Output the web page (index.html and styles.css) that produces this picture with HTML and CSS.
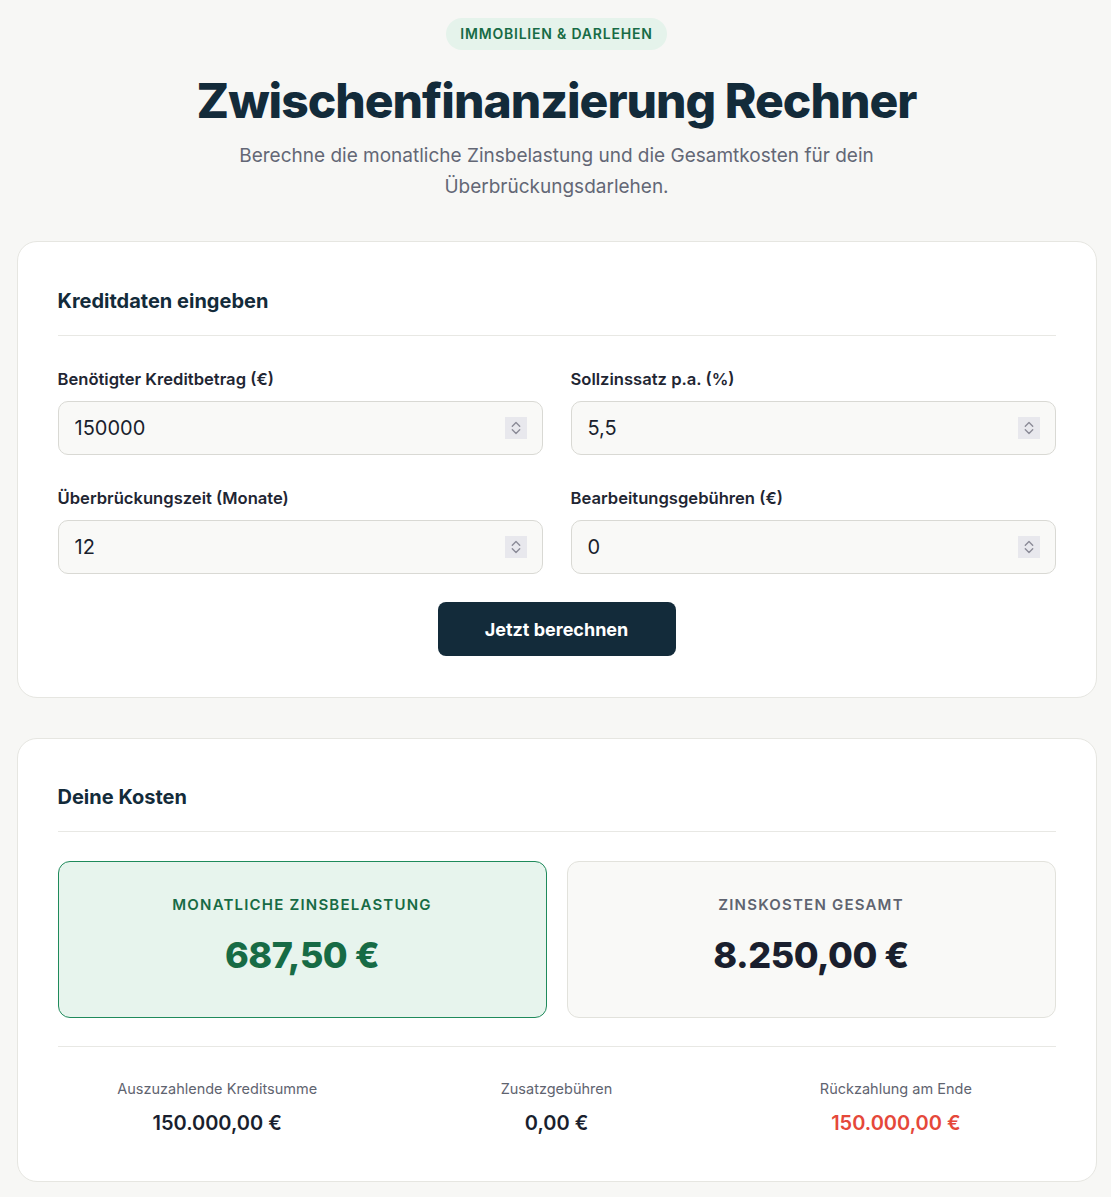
FILE: index.html
```html
<!DOCTYPE html>
<html lang="de">
<head>
    <meta charset="UTF-8">
    <meta name="viewport" content="width=device-width, initial-scale=1.0">
    <title>Zwischenfinanzierung Rechner</title>
    <link rel="stylesheet" href="styles.css">
</head>
<body>
    <div class="page">
        <header class="intro">
            <span class="badge">Immobilien &amp; Darlehen</span>
            <h1>Zwischenfinanzierung Rechner</h1>
            <p>Berechne die monatliche Zinsbelastung und die Gesamtkosten für dein Überbrückungsdarlehen.</p>
        </header>

        <!-- Eingabe -->
        <section class="card">
            <h2>Kreditdaten eingeben</h2>
            <form id="loanForm" class="fields">
                <div class="field">
                    <label for="amount">Benötigter Kreditbetrag (€)</label>
                    <div class="input-wrap">
                        <input type="text" inputmode="decimal" id="amount" value="150000">
                        <span class="spin"><svg width="22" height="22" viewBox="0 0 22 22"><path d="M7.3 9.2 11 5.6 14.7 9.2M7.3 12.8 11 16.4 14.7 12.8" fill="none" stroke="#8b8b97" stroke-width="1.4" stroke-linecap="round" stroke-linejoin="round"/></svg></span>
                    </div>
                </div>
                <div class="field">
                    <label for="rate">Sollzinssatz p.a. (%)</label>
                    <div class="input-wrap">
                        <input type="text" inputmode="decimal" id="rate" value="5,5">
                        <span class="spin"><svg width="22" height="22" viewBox="0 0 22 22"><path d="M7.3 9.2 11 5.6 14.7 9.2M7.3 12.8 11 16.4 14.7 12.8" fill="none" stroke="#8b8b97" stroke-width="1.4" stroke-linecap="round" stroke-linejoin="round"/></svg></span>
                    </div>
                </div>
                <div class="field">
                    <label for="months">Überbrückungszeit (Monate)</label>
                    <div class="input-wrap">
                        <input type="text" inputmode="numeric" id="months" value="12">
                        <span class="spin"><svg width="22" height="22" viewBox="0 0 22 22"><path d="M7.3 9.2 11 5.6 14.7 9.2M7.3 12.8 11 16.4 14.7 12.8" fill="none" stroke="#8b8b97" stroke-width="1.4" stroke-linecap="round" stroke-linejoin="round"/></svg></span>
                    </div>
                </div>
                <div class="field">
                    <label for="fees">Bearbeitungsgebühren (€)</label>
                    <div class="input-wrap">
                        <input type="text" inputmode="decimal" id="fees" value="0">
                        <span class="spin"><svg width="22" height="22" viewBox="0 0 22 22"><path d="M7.3 9.2 11 5.6 14.7 9.2M7.3 12.8 11 16.4 14.7 12.8" fill="none" stroke="#8b8b97" stroke-width="1.4" stroke-linecap="round" stroke-linejoin="round"/></svg></span>
                    </div>
                </div>
            </form>
            <button type="button" class="calc" onclick="calculate()">Jetzt berechnen</button>
        </section>

        <!-- Ergebnis -->
        <section class="card results">
            <h2>Deine Kosten</h2>
            <div class="totals">
                <div class="total highlight">
                    <div class="total-label">Monatliche Zinsbelastung</div>
                    <div class="total-value" id="monthly">687,50 €</div>
                </div>
                <div class="total">
                    <div class="total-label">Zinskosten gesamt</div>
                    <div class="total-value" id="interest">8.250,00 €</div>
                </div>
            </div>
            <div class="summary">
                <div class="item">
                    <div class="item-label">Auszuzahlende Kreditsumme</div>
                    <div class="item-value" id="payout">150.000,00 €</div>
                </div>
                <div class="item">
                    <div class="item-label">Zusatzgebühren</div>
                    <div class="item-value" id="extra">0,00 €</div>
                </div>
                <div class="item">
                    <div class="item-label">Rückzahlung am Ende</div>
                    <div class="item-value red" id="repay">150.000,00 €</div>
                </div>
            </div>
        </section>
    </div>

    <script>
        const euro = n => n.toLocaleString('de-DE', { minimumFractionDigits: 2, maximumFractionDigits: 2 }) + ' €';
        const num = id => parseFloat(document.getElementById(id).value.replace(',', '.')) || 0;

        function calculate() {
            const amount = num('amount');
            const rate = num('rate');
            const months = Math.round(num('months'));
            const fees = num('fees');

            // Zinsen pro Monat
            const monthly = amount * rate / 100 / 12;

            document.getElementById('monthly').textContent = euro(monthly);
            document.getElementById('interest').textContent = euro(monthly * months);
            document.getElementById('payout').textContent = euro(amount);
            document.getElementById('extra').textContent = euro(fees);
            document.getElementById('repay').textContent = euro(amount);
        }
    </script>
</body>
</html>
```

FILE: styles.css
```css
body {
    margin: 0;
    font-family: Inter, "Noto Sans", sans-serif;
    background-color: #f7f7f5;
    color: #1a1f2e;
}
.page {
    max-width: 1080px;
    margin: 0 auto;
    padding: 18px 0 40px 2px;
}
.intro {
    text-align: center;
}
.badge {
    display: inline-block;
    height: 32px;
    line-height: 32px;
    padding: 0 14px;
    border-radius: 16px;
    background-color: #e5f3eb;
    color: #176b45;
    font-size: 14px;
    font-weight: 600;
    letter-spacing: 0.8px;
    text-transform: uppercase;
}
h1 {
    margin: 22px 0 10px;
    font-size: 48px;
    line-height: 58px;
    font-weight: 800;
    letter-spacing: -1px;
    color: #132b3a;
}
.intro p {
    max-width: 680px;
    margin: 0 auto 39px;
    font-size: 19px;
    line-height: 31px;
    color: #636775;
}
.card {
    margin-bottom: 40px;
    padding: 45px 40px 41px;
    background-color: #fff;
    border: 1px solid #e6e6e1;
    border-radius: 20px;
}
.card h2 {
    margin: 0 0 32px;
    padding-bottom: 20px;
    border-bottom: 1px solid #e8e8e4;
    font-size: 20px;
    line-height: 28px;
    font-weight: 700;
    color: #132b3a;
}
.card.results {
    padding-top: 44px;
}
.results h2 {
    margin-bottom: 29px;
}
.fields {
    display: grid;
    grid-template-columns: 1fr 1fr;
    column-gap: 28px;
    row-gap: 32px;
}
.field label {
    display: block;
    margin-bottom: 11px;
    font-size: 16.6px;
    line-height: 22px;
    font-weight: 600;
    color: #1f2633;
}
.input-wrap {
    position: relative;
}
.field input {
    box-sizing: border-box;
    width: 100%;
    height: 54px;
    padding: 0 50px 0 16px;
    border: 1px solid #d9d9d4;
    border-radius: 10px;
    background-color: #f9f9f7;
    font-family: inherit;
    font-size: 20px;
    color: #1a1f2e;
}
.spin {
    position: absolute;
    top: 16px;
    right: 16px;
    width: 22px;
    height: 22px;
    background-color: #e8e8ed;
    pointer-events: none;
}
.spin svg {
    display: block;
}
.calc {
    display: block;
    width: 238px;
    height: 54px;
    margin: 28px auto 0;
    border: none;
    border-radius: 8px;
    background-color: #132b3a;
    color: #fff;
    font-family: inherit;
    font-size: 18px;
    font-weight: 700;
    cursor: pointer;
}
.calc:hover {
    background-color: #1d3e52;
}
.totals {
    display: grid;
    grid-template-columns: 1fr 1fr;
    gap: 20px;
    padding-bottom: 28px;
    border-bottom: 1px solid #e8e8e4;
}
.total {
    padding: 32px 24px 39px;
    text-align: center;
    background-color: #f9f9f7;
    border: 1px solid #e2e2dc;
    border-radius: 12px;
}
.total.highlight {
    background-color: #e7f4ed;
    border-color: #1f8a5b;
}
.total-label {
    margin-bottom: 16px;
    font-size: 15px;
    line-height: 22px;
    font-weight: 600;
    letter-spacing: 1.2px;
    text-transform: uppercase;
    color: #5f6470;
}
.total-value {
    font-size: 36px;
    line-height: 46px;
    font-weight: 800;
    letter-spacing: -0.5px;
    color: #1a1f2e;
}
.highlight .total-label,
.highlight .total-value {
    color: #176b45;
}
.summary {
    display: grid;
    grid-template-columns: repeat(3, 1fr);
    gap: 20px;
    padding: 32px 0 3px;
    text-align: center;
}
.item-label {
    margin-bottom: 10px;
    font-size: 14.5px;
    line-height: 20px;
    color: #5f6470;
}
.item-value {
    font-size: 20px;
    line-height: 28px;
    font-weight: 600;
    color: #1a1f2e;
}
.item-value.red {
    color: #e5483a;
}
```
